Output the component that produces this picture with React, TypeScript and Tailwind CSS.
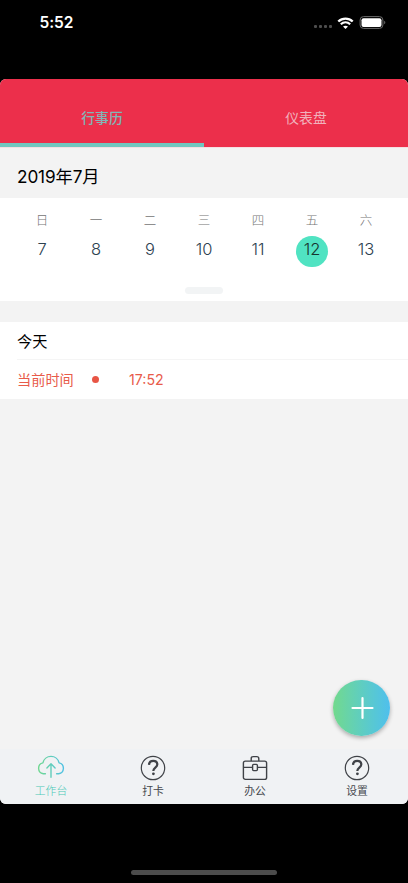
import type { ReactNode } from "react";
import clsx from "clsx";

const days = [
  { label: "日", date: 7 },
  { label: "一", date: 8 },
  { label: "二", date: 9 },
  { label: "三", date: 10 },
  { label: "四", date: 11 },
  { label: "五", date: 12, today: true },
  { label: "六", date: 13 },
];

function StatusBar() {
  return (
    <div className="flex h-[79px] shrink-0 items-start justify-between pl-[39.5px] pr-[22px] pt-[13px]">
      <span className="text-[15.5px] font-semibold leading-5 tracking-[-0.1px] text-white">5:52</span>
      <div className="flex h-5 items-center">
        <div className="mr-[5px] mt-[7px] flex gap-[2px]">
          {[0, 1, 2, 3].map((i) => (
            <span key={i} className="h-[3px] w-[3px] rounded-[1px] bg-[#4d4d4d]" />
          ))}
        </div>
        <svg className="mb-px mr-[5px] h-3 w-[17px]" viewBox="0 0 16 12" fill="none" stroke="#fff">
          <path d="M.8 4.5C4.9.6 11.1.6 15.2 4.5" strokeWidth="2.4" />
          <path d="M3.3 7.3c2.7-2.5 6.7-2.5 9.4 0" strokeWidth="2.2" />
          <path d="M8 12 5.5 9.6c1.4-1.3 3.6-1.3 5 0z" fill="#fff" stroke="none" />
        </svg>
        <svg className="mb-px h-[13px] w-[27px]" viewBox="0 0 27 13" fill="none">
          <rect x="1.1" y=".6" width="22.8" height="11.8" rx="3.4" stroke="#6b6b6b" />
          <rect x="2.5" y="2.2" width="20" height="8.8" rx="2" fill="#fff" />
          <path d="M25.2 4.7c1.5.6 1.5 3 0 3.6z" fill="#6b6b6b" />
        </svg>
      </div>
    </div>
  );
}

function CloudIcon() {
  return (
    <svg className="h-[26px] w-7" viewBox="0 0 28 26" fill="none" stroke="url(#cloud)" strokeWidth="1.4" strokeLinecap="round" strokeLinejoin="round">
      <defs>
        <linearGradient id="cloud" gradientUnits="userSpaceOnUse" x1="0" y1="0" x2="28" y2="0">
          <stop offset="0" stopColor="#72d98c" />
          <stop offset="1" stopColor="#4fc0e8" />
        </linearGradient>
      </defs>
      <path d="M8.4 18.7H6.3A5.5 5.500 0 0 1 5.900 7.900A8.300 8.300 0 0 1 22.100 7.900A5.500 5.500 0 0 1 21.700 18.700H19.600" />
      <path d="M14 22.200V8.900M9.900 12.900 14 8.800l4.100 4.100" />
    </svg>
  );
}

function QuestionIcon() {
  return (
    <svg className="h-[26px] w-[26px]" viewBox="0 0 26 26" fill="none" stroke="#3f4247">
      <circle cx="13" cy="13" r="11.7" strokeWidth="1.2" />
      <path d="M9 9.9c.1-2.6 1.8-4.1 4.2-4.1 2.4 0 4.1 1.5 4.1 3.7 0 2.9-3.9 3.2-3.9 6v.6" strokeWidth="2.2" />
      <circle cx="13.400" cy="18.800" r="1.4" fill="#3f4247" stroke="none" />
    </svg>
  );
}

function BriefcaseIcon() {
  return (
    <svg className="h-[26px] w-[26px]" viewBox="0 0 26 26" fill="none" stroke="#3f4247" strokeWidth="1.4">
      <rect x="1.4" y="6.1" width="23.2" height="18.3" rx="2" />
      <path d="M9.2 6V3.700c0-1.500.6-2.100 2-2.100h3.600c1.400 0 2 .6 2 2.100V6M1.600 12.400h9M15.400 12.400h9" />
      <rect x="10.600" y="9.400" width="4.800" height="6.200" rx="1" />
    </svg>
  );
}

function NavItem({ label, active, children }: { label: string; active?: boolean; children: ReactNode }) {
  return (
    <button
      type="button"
      className={clsx(
        "flex flex-1 flex-col items-center pt-[6px] text-[10.8px] leading-4",
        active ? "font-light text-[#4cc9b7]" : "text-[#45484d]"
      )}
    >
      {children}
      <span className="mt-[3px]">{label}</span>
    </button>
  );
}

export default function App() {
  return (
    <div className="flex h-[883px] w-[408px] flex-col overflow-hidden bg-black font-['Inter','Noto_Sans_CJK_SC',sans-serif]">
      <StatusBar />

      <main className="relative flex h-[725px] shrink-0 flex-col overflow-hidden rounded-[6px] bg-[#f3f3f3]">
        <div className="flex h-[68px] shrink-0 bg-[#ec2f4b] text-[13.8px]">
          <div className="flex flex-1 items-center justify-center border-b-[4px] border-[#70c7c0] pt-[14px] font-medium text-[#83b5b7]">
            行事历
          </div>
          <div className="flex flex-1 items-center justify-center pt-[11px] text-[#f1b2bc]">仪表盘</div>
        </div>

        <div className="flex h-[51px] shrink-0 items-center border-t border-[#f5dfe2] pl-[17px] pt-[7px] text-[17.2px] text-black">
          <span className="tracking-[-0.1px]">2019年7月</span>
        </div>

        <section className="flex h-[103px] shrink-0 flex-col items-center bg-white px-[15px]">
          <div className="grid w-full grid-cols-7">
            {days.map((d) => (
              <div key={d.date} className="flex flex-col items-center">
                <span className="mt-[13px] text-[12.5px] font-light leading-5 text-[#757575]">{d.label}</span>
                <span
                  className={clsx(
                    "mt-[5px] h-[31px] w-8 rounded-full text-center text-[16.5px] font-light leading-[27px]",
                    d.today ? "bg-[#50e3c2] text-[#17342f]" : "text-[#2d4150]"
                  )}
                >
                  {d.date}
                </span>
              </div>
            ))}
          </div>
          <div className="mt-5 h-[7px] w-[38px] rounded-full bg-[#f2f4f5]" />
        </section>

        <section className="mt-[21px] flex h-[77px] shrink-0 flex-col bg-white pl-[17px]">
          <h2 className="flex h-[38px] items-center border-b border-[#f5f5f5] pt-[3px] text-[15.2px] text-black">今天</h2>
          <div className="flex h-[39px] items-center text-[14.2px] text-[#e85b4a]">
            <span className="w-[75px]">当前时间</span>
            <span className="h-[7px] w-[7px] rounded-full bg-[#e85545]" />
            <time className="ml-[30px]">17:52</time>
          </div>
        </section>

        <button
          type="button"
          aria-label="Add"
          className="absolute bottom-[68px] right-[18px] flex h-[56px] w-[57px] items-center justify-center rounded-full bg-linear-to-r from-[#72d98c] to-[#4fbfed] shadow-[0_2px_4px_rgba(0,0,0,0.3)]"
        >
          <svg className="h-6 w-6" viewBox="0 0 24 24" stroke="#fff" strokeWidth="2.2" strokeLinecap="round">
            <path d="M12.5 2v20M2.5 12h20" />
          </svg>
        </button>

        <nav className="mt-auto flex h-[55px] shrink-0 bg-[#f0f2f4]">
          <NavItem label="工作台" active>
            <CloudIcon />
          </NavItem>
          <NavItem label="打卡">
            <QuestionIcon />
          </NavItem>
          <NavItem label="办公">
            <BriefcaseIcon />
          </NavItem>
          <NavItem label="设置">
            <QuestionIcon />
          </NavItem>
        </nav>
      </main>

      <div className="mx-auto mb-[8px] mt-auto h-[5px] w-[146px] rounded-full bg-[#4c4c4c]" />
    </div>
  );
}
